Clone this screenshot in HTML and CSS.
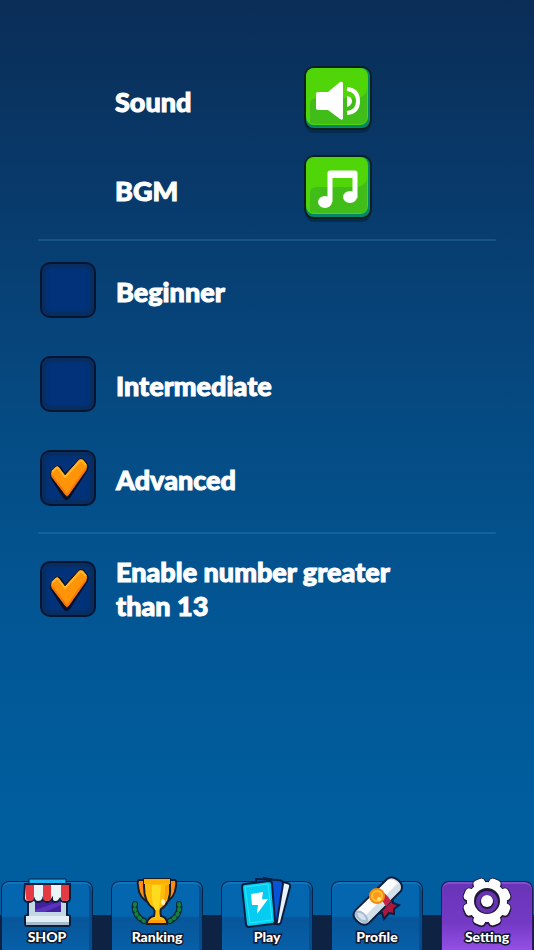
FILE: index.html
```html
<!DOCTYPE html>
<html lang="en">
<head>
  <meta charset="UTF-8">
  <meta name="viewport" content="width=device-width, initial-scale=1.0">
  <title>Setting</title>
  <link rel="stylesheet" href="styles.css">
</head>
<body>
  <main class="settings">
    <section class="audio">
      <div class="audio-row">
        <span class="label" id="sound-label">Sound</span>
        <button type="button" class="toggle" aria-labelledby="sound-label">
          <svg viewBox="0 0 68 68">
            <rect x="1" y="5" width="66" height="62" rx="9" fill="#062b50"/>
            <rect x="1" y="1" width="66" height="62" rx="9" fill="#07856a" stroke="#09211f" stroke-width="2"/>
            <rect x="2" y="2" width="62" height="57" rx="8" fill="#4fd508"/>
            <path d="M6 57V38q0-6 7-6h37q12 0 13-9v28q0 7-7 7H12z" fill="#41bd19"/>
            <path d="M14 26h10L36 16q3-1 3 2v34q0 3-3 1L24 44H14q-2 0-2-2V28q0-2 2-2z" fill="#fff"/>
            <path d="M43 30q5 1 5 5t-5 6z" fill="#fff"/>
            <path d="M43 23q11 1 11 12t-11 12" fill="none" stroke="#fff" stroke-width="4"/>
          </svg>
        </button>
      </div>
      <div class="audio-row">
        <span class="label" id="bgm-label">BGM</span>
        <button type="button" class="toggle" aria-labelledby="bgm-label">
          <svg viewBox="0 0 68 68">
            <rect x="1" y="5" width="66" height="62" rx="9" fill="#062b50"/>
            <rect x="1" y="1" width="66" height="62" rx="9" fill="#07856a" stroke="#09211f" stroke-width="2"/>
            <rect x="2" y="2" width="62" height="57" rx="8" fill="#4fd508"/>
            <path d="M6 57V38q0-6 7-6h37q12 0 13-9v28q0 7-7 7H12z" fill="#41bd19"/>
            <path d="M26 47V18h25v25" fill="none" stroke="#fff" stroke-width="5" stroke-linejoin="round"/>
            <path d="M24 17h29v6H24z" fill="#fff"/>
            <ellipse cx="21" cy="47" rx="7" ry="6" fill="#fff"/>
            <ellipse cx="46" cy="42" rx="7" ry="6" fill="#fff"/>
          </svg>
        </button>
      </div>
    </section>

    <hr class="divider">

    <section class="options">
      <div class="option">
        <span class="check">
          <input type="checkbox" id="beginner">
          <svg viewBox="0 0 56 56"><use href="#tick"/></svg>
        </span>
        <label class="label" for="beginner">Beginner</label>
      </div>
      <div class="option">
        <span class="check">
          <input type="checkbox" id="intermediate">
          <svg viewBox="0 0 56 56"><use href="#tick"/></svg>
        </span>
        <label class="label" for="intermediate">Intermediate</label>
      </div>
      <div class="option">
        <span class="check">
          <input type="checkbox" id="advanced" checked>
          <svg viewBox="0 0 56 56"><use href="#tick"/></svg>
        </span>
        <label class="label" for="advanced">Advanced</label>
      </div>
    </section>

    <hr class="divider divider-low">

    <section class="options">
      <div class="option">
        <span class="check">
          <input type="checkbox" id="over13" checked>
          <svg viewBox="0 0 56 56"><use href="#tick"/></svg>
        </span>
        <label class="label wide" for="over13">Enable number greater than 13</label>
      </div>
    </section>
  </main>

  <nav class="tabs">
    <a href="#shop" class="tab">
      <svg viewBox="0 0 60 52">
        <path d="M11 22h39v17l3 1v8q0 2-2 2H10q-2 0-2-2v-8l3-1z" fill="#c3d7e4" stroke="#0b1f3d" stroke-width="2"/>
        <path d="M9 40h43v7H9z" fill="#e2eef4"/>
        <path d="M9 46h43v3H9z" fill="#a4bdce"/>
        <rect x="18" y="25" width="26" height="11" fill="#4420a0"/>
        <path d="M18 34l26-9v4L28 36H18z" fill="#5b34bd"/>
        <path d="M12 3h37v6H12z" fill="#20b6f5" stroke="#0b1f3d"/>
        <path d="M8 8h45v14q0 4-5 4-4 0-5-3-2 3-4 3-4 0-4-3-2 3-5 3t-4-3q-1 3-5 3-3 0-4-3-2 3-5 3-5 0-5-4z" fill="#eaf3f6" stroke="#0b1f3d" stroke-width="2"/>
        <path d="M9 9h8v13q0 3-4 3t-4-3zM26 9h8v13q0 3-4 3t-4-3zM44 9h8v13q0 3-4 3t-4-3z" fill="#e43a43"/>
      </svg>
      <span>SHOP</span>
    </a>
    <a href="#ranking" class="tab">
      <svg viewBox="0 0 60 52">
        <g fill="none" stroke="#0b2635" stroke-width="6" stroke-linecap="round">
          <path d="M8 28q-2 11 9 17M52 28q2 11-9 17"/>
        </g>
        <g fill="none" stroke="#12813f" stroke-width="4" stroke-linecap="round" stroke-dasharray="1 4">
          <path d="M8 28q-2 11 9 17M52 28q2 11-9 17"/>
        </g>
        <path d="M12 4q-2 1-1 6 1 13 12 17h14q11-4 12-17 1-5-1-6z" fill="#ff8a17" stroke="#171d2c" stroke-width="2"/>
        <path d="M17 3h26v8q1 16-9 22-1 2 0 7 6 1 6 8H20q1-7 7-8 1-5 0-7-10-6-10-22z" fill="#ffbd0b" stroke="#171d2c" stroke-width="2"/>
        <path d="M17 3h26v5H17z" fill="#ffb000"/>
        <path d="M25 9h9l-2 25h-4q-4-8-3-25z" fill="#ffdb20"/>
        <path d="M38 9h4q0 15-9 23 6-8 5-23zM22 44h16l1 3H21z" fill="#ff9d0b"/>
        <ellipse cx="36" cy="26" rx="2" ry="3" fill="#fff2ad"/>
      </svg>
      <span>Ranking</span>
    </a>
    <a href="#play" class="tab">
      <svg viewBox="0 0 60 52">
        <path d="M27 2l23 5q4 1 3 4l-9 35q-1 3-4 2l-19-4z" fill="#e8f1ff" stroke="#0b1f3d" stroke-width="2"/>
        <path d="M19 3l22 1q5 0 5 4l-6 37q0 3-3 3H18z" fill="#0754d8" stroke="#0b1f3d" stroke-width="2"/>
        <path d="M8 8l24-3q3 0 3 3l3 37q0 3-3 3l-23 3q-3 0-3-3L5 11q0-3 3-3z" fill="#07ccf2" stroke="#0b1f3d" stroke-width="2"/>
        <path d="M8 11l23-3 4 36-22 3z" fill="none" stroke="#25eaff"/>
        <path d="M14 18l12-2-1 7h6L20 38l1-9h-6z" fill="#fff"/>
      </svg>
      <span>Play</span>
    </a>
    <a href="#profile" class="tab">
      <svg viewBox="0 0 60 52">
        <path d="M31 29l14-8 1 6 6 2-5 4v5l-5-1-5 6-2-6-6 1z" fill="#ad173f" stroke="#0b1f3d" stroke-width="2"/>
        <path d="M8 35L40 3q5-4 11 1t3 11L22 47q-5 4-11-1-7-6-3-11z" fill="#d3dfe9" stroke="#0b1f3d" stroke-width="2"/>
        <path d="M9 35L41 4q5-2 10 3L18 40q-5-5-9-5z" fill="#fff"/>
        <path d="M9 35q5-2 10 4 4 5 1 8-4 1-9-4t-2-8z" fill="#a5bbcf"/>
        <path d="M10 37q5-1 8 4 2 4-1 3-5 0-7-7z" fill="#d4e2ee"/>
        <path d="M31 15q8 1 13 10l-5 6q-3-8-12-10z" fill="#c82349"/>
        <circle cx="30" cy="20" r="7" fill="#ffc42b" stroke="#f58a15" stroke-width="2"/>
        <circle cx="30" cy="20" r="4" fill="#ff991c"/>
        <circle cx="32" cy="23" r="2" fill="#ffe486"/>
      </svg>
      <span>Profile</span>
    </a>
    <a href="#setting" class="tab active">
      <svg viewBox="0 0 60 52">
        <defs>
          <g id="cog">
            <circle r="20"/>
            <g id="teeth">
              <rect x="-24" y="-6" width="48" height="12" rx="4" transform="rotate(22.5)"/>
              <rect x="-24" y="-6" width="48" height="12" rx="4" transform="rotate(67.5)"/>
              <rect x="-24" y="-6" width="48" height="12" rx="4" transform="rotate(112.5)"/>
              <rect x="-24" y="-6" width="48" height="12" rx="4" transform="rotate(157.5)"/>
            </g>
          </g>
        </defs>
        <use href="#cog" x="30" y="27" fill="#20183c" stroke="#20183c" stroke-width="2"/>
        <use href="#cog" x="30" y="26" fill="#20183c" stroke="#20183c" stroke-width="2"/>
        <use href="#cog" x="30" y="26" fill="#fff"/>
        <circle cx="30" cy="25" r="13" fill="#20183c"/>
        <circle cx="30" cy="26" r="11" fill="#6634ae"/>
        <circle cx="30" cy="26" r="7" fill="#20183c"/>
        <circle cx="30" cy="25" r="6" fill="#fff"/>
      </svg>
      <span>Setting</span>
    </a>
  </nav>

  <svg class="defs" width="0" height="0">
    <symbol id="tick" viewBox="0 0 56 56">
      <path d="M17 16q2-1 4 1l4 6L39 9q3-2 5 0l4 5q1 2 0 6L30 48q-4 4-7 0L11 29q-2-4 0-7z" fill="#050f2c"/>
      <path d="M16 16q2-1 3 1l6 8L39 9q2-1 4 0l4 5q1 2 0 5L29 45q-2 3-4 0L11 26q-1-2 0-4z" fill="#ff9408" stroke="#161727"/>
      <path d="M12 22l4-4q2-1 3 1l6 8L40 11h2l4 4" fill="none" stroke="#ffb629" stroke-width="2"/>
      <path d="M46 19L28 44q-1 1-2 0L12 26" fill="none" stroke="#f4740d" stroke-width="2"/>
    </symbol>
  </svg>
</body>
</html>
```

FILE: styles.css
```css
* {
  box-sizing: border-box;
}

body {
  margin: 0;
  min-height: 100vh;
  display: flex;
  flex-direction: column;
  font-family: Lato, "Open Sans", sans-serif;
  font-weight: 900;
  color: #fff;
  background: linear-gradient(#0a2d57 0%, #083b6d 22%, #054b83 45%, #025694 65%, #005e9f 88%, #005e9f 100%);
}

.settings {
  padding: 66px 38px 40px;
}

.audio {
  display: grid;
  gap: 21px;
}

.audio-row {
  display: grid;
  grid-template-columns: 189px auto;
  justify-content: start;
  align-items: center;
  padding-left: 77px;
}

.label {
  padding-top: 3px;
  font-size: 27px;
  line-height: 34px;
  -webkit-text-stroke: 1px #fff;
}

.toggle {
  width: 68px;
  height: 68px;
  padding: 0;
  border: none;
  background: none;
  cursor: pointer;
}

.toggle svg {
  display: block;
}

.divider {
  height: 2px;
  margin: 16px 0 21px;
  border: none;
  border-radius: 1px;
  background: #175485;
}

.divider-low {
  margin-top: 26px;
  background: #1263a0;
}

.options {
  display: grid;
  gap: 38px;
  padding-left: 2px;
}

.option {
  display: flex;
  align-items: center;
  gap: 20px;
}

.wide {
  max-width: 300px;
  padding-top: 0;
}

/* checkbox with the tick drawn over it */
.check {
  display: grid;
  flex: none;
}

.check input,
.check svg {
  grid-area: 1 / 1;
  width: 56px;
  height: 56px;
  margin: 0;
}

.check input {
  appearance: none;
  border: 2px solid #071531;
  border-radius: 10px;
  background: #02337a;
  box-shadow: inset 0 0 0 4px #072e63, inset 0 0 3px 5px #05306e;
  cursor: pointer;
}

.check svg {
  visibility: hidden;
  pointer-events: none;
}

.check input:checked + svg {
  visibility: visible;
}

.tabs {
  display: grid;
  grid-template-columns: repeat(5, 1fr);
  gap: 18px;
  margin-top: auto;
  padding: 0 1px;
  background: linear-gradient(transparent 34px, #0e2344 34px);
}

.tab {
  display: flex;
  flex-direction: column;
  align-items: center;
  height: 69px;
  border: 1px solid #07254a;
  border-bottom: none;
  border-radius: 8px 8px 0 0;
  background: linear-gradient(#0566b0 0, #0566b0 34px, #07569a 36px, #0760a8 100%);
  box-shadow: inset 0 2px 0 #1474b8, inset -3px 0 0 #064c8b;
  color: #fff;
  font-size: 14px;
  line-height: 18px;
  text-decoration: none;
}

.tab svg {
  width: 60px;
  height: 52px;
  margin-top: -6px;
}

.tab span {
  -webkit-text-stroke: 3px #10182c;
  paint-order: stroke fill;
}

.tab.active {
  border-color: #251b59;
  background: linear-gradient(#6934b7, #7339c4 60%, #9450e5);
  box-shadow: inset 0 2px 0 #8150c8;
}

.defs {
  position: absolute;
}
```
